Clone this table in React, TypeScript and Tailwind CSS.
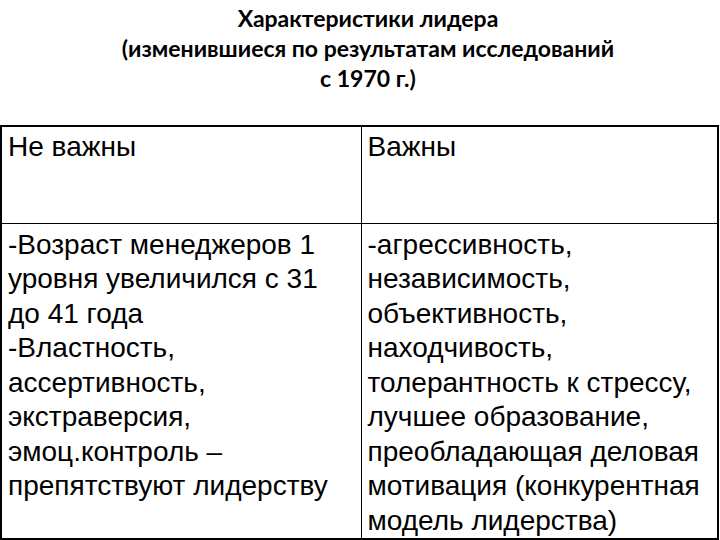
export default function App() {
  return (
    <div className="w-[720px] h-[540px] bg-white overflow-hidden text-black">
      <div className="pt-[3px] pl-[16px] h-[125px] text-center font-['Lato','Open_Sans',sans-serif] font-bold text-[23px] leading-[30px]">
        <p>Характеристики лидера</p>
        <p>(изменившиеся по результатам исследований</p>
        <p>с 1970 г.)</p>
      </div>
      <table className="w-[719px] border-collapse font-['Liberation_Sans',Arial,sans-serif] text-[28px] leading-[34.5px] border-2 border-black whitespace-nowrap">
        <tbody>
          <tr className="h-[97px]">
            <td className="w-[360px] align-top border border-black pl-[6px] pt-[3px]">Не важны</td>
            <td className="align-top border border-black pl-[6px] pt-[3px]">Важны</td>
          </tr>
          <tr className="h-[316px]">
            <td className="align-top border border-black pl-[6px] pt-[4px]">
              -Возраст менеджеров 1<br />
              уровня увеличился с 31<br />
              до 41 года<br />
              -Властность,<br />
              ассертивность,<br />
              экстраверсия,<br />
              эмоц.контроль –<br />
              препятствуют лидерству
            </td>
            <td className="align-top border border-black pl-[6px] pt-[4px]">
              -агрессивность,<br />
              независимость,<br />
              объективность,<br />
              находчивость,<br />
              толерантность к стрессу,<br />
              лучшее образование,<br />
              преобладающая деловая<br />
              мотивация (конкурентная<br />
              модель лидерства)
            </td>
          </tr>
        </tbody>
      </table>
    </div>
  )
}
